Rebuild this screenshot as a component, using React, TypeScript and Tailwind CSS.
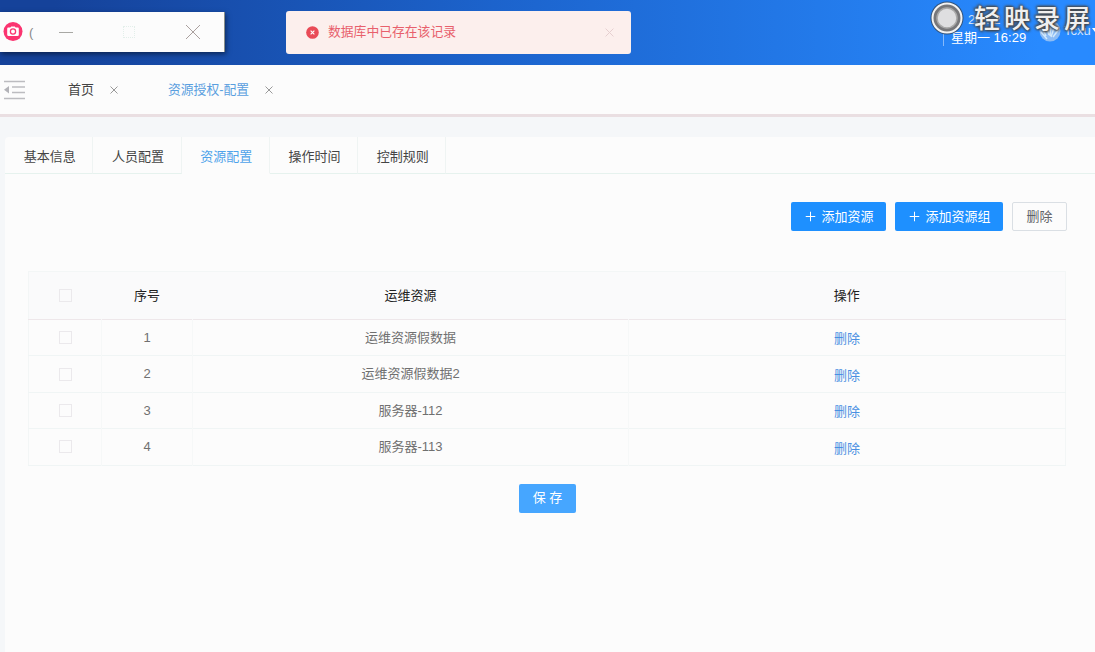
import React from "react";
import { Plus } from "lucide-react";

const tabs = ["基本信息", "人员配置", "资源配置", "操作时间", "控制规则"];

const rows = [
  { id: 1, name: "运维资源假数据" },
  { id: 2, name: "运维资源假数据2" },
  { id: 3, name: "服务器-112" },
  { id: 4, name: "服务器-113" },
];

const Cross = ({ className }: { className?: string }) => (
  <svg
    viewBox="0 0 16 16"
    fill="none"
    stroke="currentColor"
    strokeWidth="1"
    className={className}
  >
    <path d="M1 1 15 15M15 1 1 15" vectorEffect="non-scaling-stroke" />
  </svg>
);

const Checkbox = () => (
  <span className="block h-[13px] w-[13px] border border-[#ebe9ec]" />
);

const RecorderWindow = () => (
  <div className="absolute top-3 left-0 h-10 w-[225px] border-r border-[#8a8f8a] bg-[#fcfcfc] shadow-[1px_2px_5px_rgba(0,0,0,0.5)]">
    <div className="flex h-full items-center">
      <svg viewBox="0 0 20 20" className="ml-[3px] h-5 w-5">
        <circle cx="10" cy="9.500" r="9.500" fill="#fb3470" />
        <path
          d="M5.4 5.500h2l.8-1h3.6l.8 1h2c.8 0 1.2.5 1.2 1.2v6c0 .8-.5 1.2-1.2 1.2H5.4c-.8 0-1.2-.5-1.2-1.2v-6c0-.7.5-1.2 1.2-1.2z"
          fill="#fff"
        />
        <circle cx="10" cy="9.500" r="2.600" fill="none" stroke="#fb3470" strokeWidth="1.300" />
      </svg>
      <span className="ml-[6px] w-[10px] text-[13px] leading-none text-[#888]">(</span>
      <span className="ml-5 h-px w-[14px] bg-[#a8a8a4]" />
      <span className="ml-[50px] h-3 w-3 border border-dotted border-[#e3efea]" />
      <Cross className="ml-[50px] h-4 w-4 text-[#aaa09e]" />
    </div>
  </div>
);

const Toast = () => (
  <div className="absolute top-[11px] left-[286px] flex h-[43px] w-[345px] items-center rounded-[3px] bg-[#fcefed] px-5">
    <svg viewBox="0 0 14 14" className="h-[13px] w-[13px]">
      <circle cx="7" cy="7" r="6.800" fill="#e94b57" />
      <path d="M5 5l4 4M9 5l-4 4" stroke="#fff" strokeWidth="1.200" />
    </svg>
    <span className="ml-[9px] text-[12.8px] leading-none text-[#e8606c]">
      数据库中已存在该记录
    </span>
    <Cross className="mr-[-3px] ml-auto h-[9px] w-[9px] text-[#e6cfd0]" />
  </div>
);

const UserInfo = () => (
  <div className="absolute top-0 right-0 h-[65px] w-[165px] text-white">
    <span className="absolute top-[13px] left-[38px] text-[13px] leading-[13px] whitespace-nowrap text-[#d5e7ff]">
      20 : 2
    </span>
    <span className="absolute top-[29px] left-[13px] h-[17px] w-px bg-[#86b9fa]" />
    <span className="absolute top-[31px] left-[21px] text-[13px] leading-[14px] whitespace-nowrap">
      星期一 16:29
    </span>
    <svg viewBox="0 0 22 22" className="absolute top-5 left-[109px] h-[22px] w-[22px]">
      <circle cx="11" cy="11" r="10.500" fill="#8dbcf4" />
      <path
        d="M3 7l4 9M7 5l3 10M12 4l-1 12M16 5l-4 12M20 9l-6 8M2 12l6 7"
        stroke="#d3e9fb"
        strokeWidth="1.500"
        fill="none"
      />
    </svg>
    <span className="absolute top-[24px] left-[134px] text-[13px] leading-[13px] text-[#d5e7ff]">
      Tcxu
    </span>
    <span className="absolute top-[28px] left-[162px] border-x-[3px] border-t-4 border-x-transparent border-t-white" />
    <svg viewBox="0 0 34 34" className="absolute top-px left-0 h-[34px] w-[34px]">
      <circle cx="17" cy="17" r="16.500" fill="#315177" />
      <circle cx="17" cy="17" r="14.500" fill="#77777a" stroke="#f2f2f2" strokeWidth="2" />
      <circle cx="17" cy="17" r="10" fill="#dedee0" stroke="#a9a9a9" strokeWidth="1.500" />
    </svg>
    <span className="absolute top-1 left-[44px] text-[26px] leading-[30px] font-medium tracking-[4px] whitespace-nowrap text-[#f0f0f0] [text-shadow:0_0_2px_#444,0_0_3px_#444,1px_1px_3px_#444,-1px_-1px_3px_#555]">
      轻映录屏
    </span>
  </div>
);

const App = () => {
  return (
    <div className="flex h-[652px] w-[1095px] flex-col overflow-hidden bg-[#fcfcfc] font-['Liberation_Sans','Noto_Sans_CJK_SC',sans-serif] text-[13px] text-[#444]">
      <header className="relative h-[65px] shrink-0 bg-linear-to-r from-[#15429a] from-5% via-[#1c63cc] via-45% to-[#288aff] to-95%">
        <RecorderWindow />
        <Toast />
        <UserInfo />
      </header>

      <nav className="flex h-[52px] shrink-0 items-center border-b-[3px] border-[#eadfe2] pt-px">
        <svg
          viewBox="0 0 22 20"
          className="ml-1 h-5 w-[22px]"
          stroke="#bcbcc0"
          strokeWidth="1.500"
        >
          <path d="M0 1.500h21M8 7h13M8 12.500h13M0 18.500h21" />
          <path d="M0 9.700 5 6v7.500z" fill="#b3b3b8" stroke="none" />
        </svg>
        <span className="ml-[42px]">首页</span>
        <Cross className="ml-4 h-2 w-2 text-[#999]" />
        <span className="ml-[50px] w-[81px] text-[12.8px] whitespace-nowrap text-[#5a9fdf]">
          资源授权-配置
        </span>
        <Cross className="ml-4 h-2 w-2 text-[#999]" />
      </nav>

      <main className="flex-1 bg-[#f5f7f9] pt-5 pl-[5px]">
        <div className="h-full rounded-tl bg-[#fcfcfc]">
          <div className="flex h-[37px]">
            {tabs.map((tab) => (
              <div
                key={tab}
                className={`flex w-[88.3px] items-center justify-center border-r border-b border-r-[#eff4f3] pt-[3px] pl-[2px] ${
                  tab === "资源配置"
                    ? "border-b-transparent text-[#4fa3ea]"
                    : "border-b-[#e6f2ee]"
                }`}
              >
                {tab}
              </div>
            ))}
            <div className="flex-1 border-b border-[#e6f2ee]" />
          </div>

          <div className="mt-7 mr-7 flex justify-end gap-[9px] text-white">
            <button className="flex h-[29px] w-[95px] items-center justify-center gap-[3px] rounded-[2px] bg-[#1e90ff]">
              <Plus size={15} strokeWidth={1.6} />
              添加资源
            </button>
            <button className="flex h-[29px] w-[108px] items-center justify-center gap-[3px] rounded-[2px] bg-[#1e90ff]">
              <Plus size={15} strokeWidth={1.6} />
              添加资源组
            </button>
            <button className="h-[29px] w-[55px] rounded-[2px] border border-[#dadfe4] text-[#606266]">
              删除
            </button>
          </div>

          <table className="mt-10 ml-[23px] w-[1037px] table-fixed border-collapse border border-[#f3f6f6] text-center text-[#707070]">
            <colgroup>
              <col className="w-[73px]" />
              <col className="w-[91px]" />
              <col className="w-[436px]" />
              <col className="w-[437px]" />
            </colgroup>
            <thead>
              <tr className="h-12 border-b border-[#eee7ea] bg-[#fafafb] text-[#222]">
                <th className="pl-[30px]">
                  <Checkbox />
                </th>
                <th className="font-normal">序号</th>
                <th className="font-normal">运维资源</th>
                <th className="font-normal">操作</th>
              </tr>
            </thead>
            <tbody>
              {rows.map((row) => (
                <tr key={row.id} className="h-[36.4px] border-b border-[#f0f5f5]">
                  <td className="border-r border-[#f6f8f8] pl-[30px]">
                    <Checkbox />
                  </td>
                  <td className="border-r border-[#f6f8f8]">{row.id}</td>
                  <td className="border-r border-[#f6f8f8]">{row.name}</td>
                  <td className="pt-[3px] text-[#4a90e2]">删除</td>
                </tr>
              ))}
            </tbody>
          </table>

          <div className="mt-[18px] flex pl-[514px]">
            <button className="h-[29px] w-[57px] rounded-[2px] bg-[#46a6ff] text-white">
              保 存
            </button>
          </div>
        </div>
      </main>
    </div>
  );
};

export default App;
